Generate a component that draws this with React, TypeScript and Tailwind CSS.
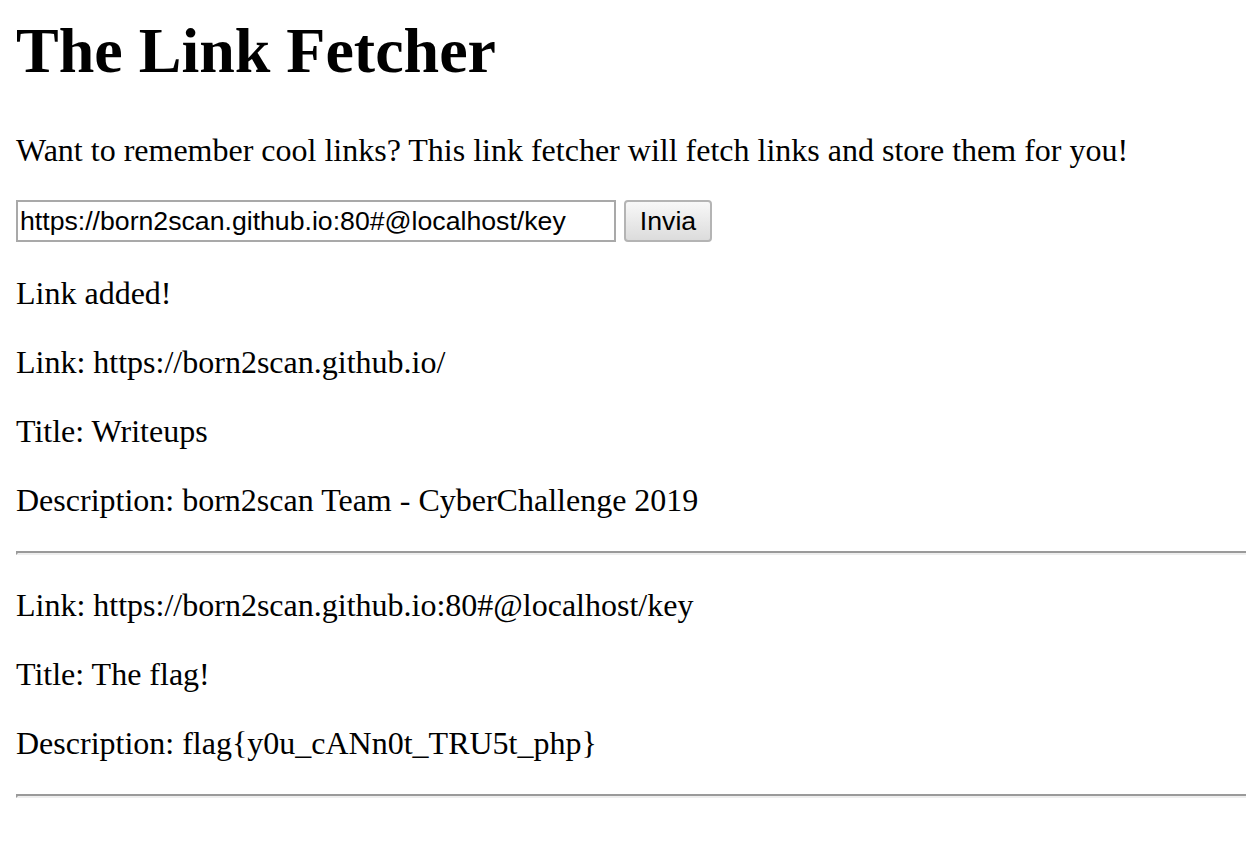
import React from "react";

const entries = [
    {
        link: "https://born2scan.github.io/",
        title: "Writeups",
        description: "born2scan Team - CyberChallenge 2019",
    },
    {
        link: "https://born2scan.github.io:80#@localhost/key",
        title: "The flag!",
        description: "flag{y0u_cANn0t_TRU5t_php}",
    },
];

// inset rule, like the browser's default <hr> at 2x
const Rule = ({ className }: { className: string }) => (
    <div className={`h-0 border-t-2 border-b-2 border-l-2 border-t-[#9a9a9a] border-l-[#9a9a9a] border-b-[#eeeeee] ${className}`} />
);

const App: React.FC = () => {
    return (
        <div className="min-h-screen bg-white pl-4 text-black font-['Liberation_Serif',serif] text-[32px] leading-[normal] flex flex-col">
            <h1 className="mt-[14px] text-[64px] font-bold leading-[normal]">The Link Fetcher</h1>
            <p className="mt-[44px]">
                Want to remember cool links? This link fetcher will fetch links and store them for you!
            </p>

            <form className="mt-[31px] flex gap-2 font-['Liberation_Sans',sans-serif] text-[26.67px]">
                <input
                    type="text"
                    name="link"
                    defaultValue="https://born2scan.github.io:80#@localhost/key"
                    className="w-[600px] h-[42px] px-[2px] border-2 border-[#a9a9a9] bg-white text-black outline-none"
                />
                <button
                    type="submit"
                    className="w-[88px] h-[42px] border-2 border-[#b4b4b4] rounded-[4px] bg-gradient-to-b from-[#f8f8f8] to-[#dcdcdc] text-black">
                    Invia
                </button>
            </form>

            <p className="mt-[33px]">Link added!</p>

            {entries.map((e, i) => (
                <div key={i} className="flex flex-col">
                    <p className="mt-8">Link: {e.link}</p>
                    <p className="mt-8">Title: {e.title}</p>
                    <p className="mt-8">Description: {e.description}</p>
                    <Rule className="mt-[32px]" />
                </div>
            ))}
        </div>
    );
};

export default App;
